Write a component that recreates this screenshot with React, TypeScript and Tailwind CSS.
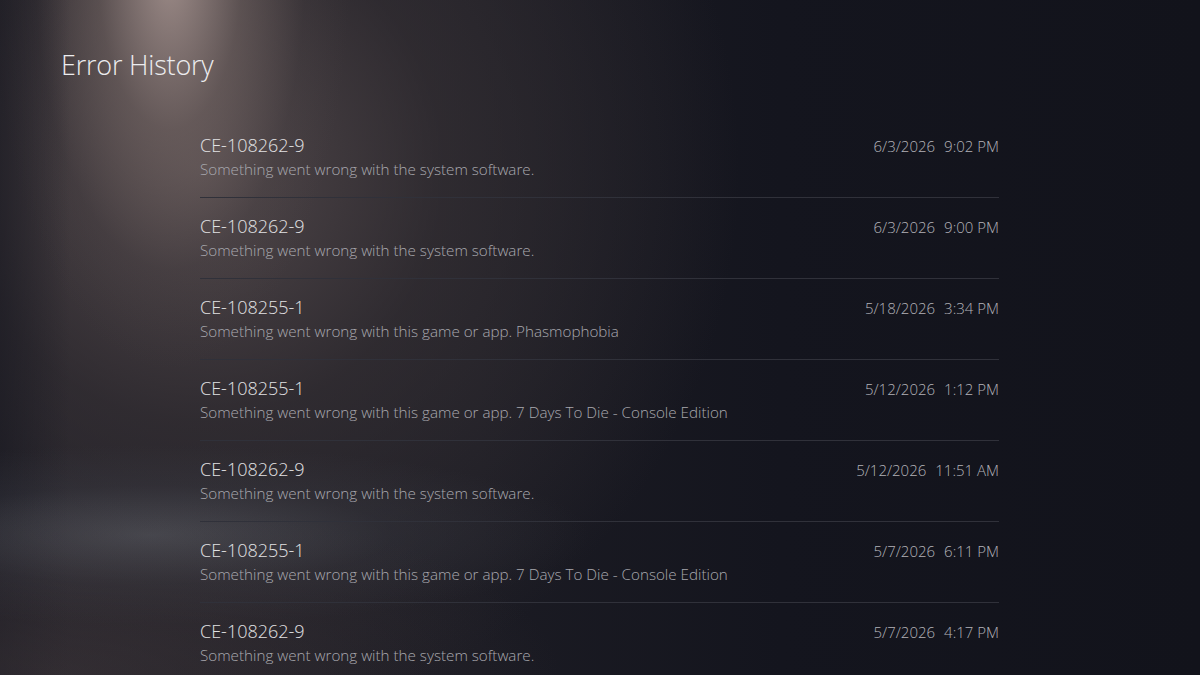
import React from "react";

type ErrorEntry = {
  code: string;
  message: string;
  date: string;
  time: string;
};

const entries: ErrorEntry[] = [
  { code: "CE-108262-9", message: "Something went wrong with the system software.", date: "6/3/2026", time: "9:02 PM" },
  { code: "CE-108262-9", message: "Something went wrong with the system software.", date: "6/3/2026", time: "9:00 PM" },
  { code: "CE-108255-1", message: "Something went wrong with this game or app. Phasmophobia", date: "5/18/2026", time: "3:34 PM" },
  { code: "CE-108255-1", message: "Something went wrong with this game or app. 7 Days To Die - Console Edition", date: "5/12/2026", time: "1:12 PM" },
  { code: "CE-108262-9", message: "Something went wrong with the system software.", date: "5/12/2026", time: "11:51 AM" },
  { code: "CE-108255-1", message: "Something went wrong with this game or app. 7 Days To Die - Console Edition", date: "5/7/2026", time: "6:11 PM" },
  { code: "CE-108262-9", message: "Something went wrong with the system software.", date: "5/7/2026", time: "4:17 PM" },
];

function ErrorRow({ entry, last }: { entry: ErrorEntry; last: boolean }) {
  return (
    <li className={`flex h-[81px] flex-col pt-[16px] ${last ? "" : "border-b border-[#30313a]"}`}>
      <div className="flex items-baseline justify-between">
        <span className="text-[18px] leading-[24px] text-[#e2e2e4]">{entry.code}</span>
        <span className="flex gap-[9px] text-[15px] leading-[24px] text-[#b2b2b8]">
          <span>{entry.date}</span>
          <span>{entry.time}</span>
        </span>
      </div>
      <p className="text-[15.2px] leading-[22px] text-[#a8a8ae]">{entry.message}</p>
    </li>
  );
}

export default function App() {
  return (
    <div
      className="relative h-[675px] w-[1200px] overflow-hidden bg-[#14151e] font-light text-white"
      style={{ fontFamily: '"Open Sans", "Noto Sans", sans-serif' }}
    >
      {/* ambient lighting layers */}
      <div className="pointer-events-none absolute inset-0 bg-[linear-gradient(90deg,#1f1e26_0%,#1b1b23_40%,#14151e_65%,#12131b_100%)]" />
      <div className="pointer-events-none absolute inset-0 bg-[radial-gradient(ellipse_540px_560px_at_200px_170px,rgba(86,76,78,0.92)_0%,rgba(62,55,58,0.55)_45%,transparent_100%)]" />
      <div className="pointer-events-none absolute inset-0 bg-[radial-gradient(ellipse_180px_400px_at_170px_-30px,rgba(180,160,155,0.82)_0%,rgba(132,116,112,0.45)_40%,rgba(90,80,80,0.12)_75%,transparent_100%)]" />
      <div className="pointer-events-none absolute inset-0 bg-[linear-gradient(90deg,rgba(20,21,30,0.5)_0%,transparent_70px)]" />
      <div className="pointer-events-none absolute inset-0 bg-[radial-gradient(ellipse_440px_90px_at_150px_535px,rgba(100,104,112,0.5)_0%,rgba(70,73,82,0.22)_55%,transparent_100%)]" />
      <div className="pointer-events-none absolute inset-0 bg-[radial-gradient(ellipse_500px_180px_at_60px_675px,rgba(72,62,64,0.45)_0%,transparent_100%)]" />

      <div className="relative flex flex-col">
        <h1 className="pl-[61px] pt-[45px] text-[27px] font-light leading-[40px] tracking-[-0.2px] text-[#ececee]">
          Error History
        </h1>
        <ul className="ml-[200px] mt-[32px] w-[799px]">
          {entries.map((e, i) => (
            <ErrorRow key={i} entry={e} last={i === entries.length - 1} />
          ))}
        </ul>
      </div>
    </div>
  );
}
